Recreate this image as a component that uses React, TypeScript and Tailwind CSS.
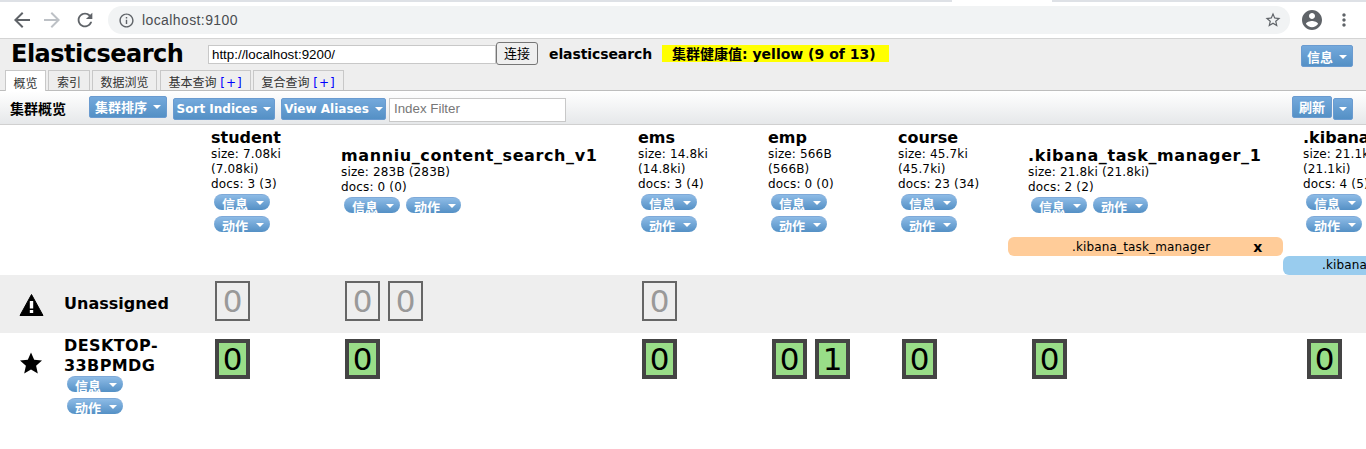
import React from "react";

const sans = "font-['DejaVu_Sans','Noto_Sans_CJK_SC',sans-serif]";

function Icon({ d, className = "", fill = "#5f6368" }: { d: string; className?: string; fill?: string }) {
  return (
    <svg viewBox="0 0 24 24" className={className} fill={fill}>
      <path d={d} />
    </svg>
  );
}

function Caret() {
  return <span className="ml-[6px] inline-block w-0 h-0 border-x-[4px] border-x-transparent border-t-[4px] border-t-white" />;
}

function Btn({ label, className = "" }: { label: string; className?: string }) {
  return (
    <div className={`flex items-center justify-center shrink-0 h-[22px] whitespace-nowrap rounded-[2px] border border-[#6a9bd0] bg-gradient-to-b from-[#74a9dc] to-[#5490c5] text-white font-bold leading-none ${className}`}>
      <span>{label}</span>
      <Caret />
    </div>
  );
}

function Pill({ label, narrow = false }: { label: string; narrow?: boolean }) {
  return (
    <div className={`${narrow ? "w-[55px]" : "w-[56px]"} h-[16px] overflow-hidden rounded-[8px] border-t border-[#7ea9d8] bg-gradient-to-b from-[#8dbbe6] to-[#5490c5] text-white font-bold text-[13px] leading-[20px] flex pl-[8px] shrink-0`}>
      <span>{label}</span>
      <span className="ml-[8px] mt-[6px] w-0 h-0 border-x-[4px] border-x-transparent border-t-[4px] border-t-white" />
    </div>
  );
}

function IndexHead({ name, lines, row = false, wide = false }: { name: string; lines: string[]; row?: boolean; wide?: boolean }) {
  return (
    <div className="pl-[20px] self-center mb-[2px]">
      <div className={`text-[16px] font-bold leading-[18px] whitespace-nowrap ${wide ? "tracking-[0.6px]" : ""}`}>{name}</div>
      {lines.map((l) => (
        <div key={l} className="text-[12px] leading-[15px] whitespace-nowrap tracking-[0.15px]">
          {l}
        </div>
      ))}
      <div className={row ? "flex gap-[6px] mt-[2px] ml-[3px]" : "flex flex-col gap-[6px] mt-[2px] ml-[3px]"}>
        <Pill label="信息" />
        <Pill label="动作" narrow={row} />
      </div>
    </div>
  );
}

function Shard({ n, primary }: { n: string; primary?: boolean }) {
  return primary ? (
    <div className="w-[35px] h-[40px] shrink-0 border-[4px] border-[#444444] bg-[#99dd88] flex items-center justify-center text-[31px] text-black leading-none font-normal">
      {n}
    </div>
  ) : (
    <div className="w-[35px] h-[40px] shrink-0 border-[2px] border-[#666666] flex items-center justify-center text-[31px] text-[#999999] leading-none font-normal">
      {n}
    </div>
  );
}

function Shards({ items, primary }: { items: string[]; primary?: boolean }) {
  return (
    <div className="pl-[24px] flex gap-[8px] items-start pt-[6px]">
      {items.map((n, i) => (
        <Shard key={i} n={n} primary={primary} />
      ))}
    </div>
  );
}

const cols = "grid grid-cols-[191px_130px_297px_130px_130px_130px_275px_130px]";

export default function App() {
  return (
    <div className={`w-[1366px] h-[449px] overflow-hidden bg-white text-black ${sans}`}>
      {/* browser chrome */}
      <div className="flex h-[2px] bg-[#dee1e6]">
        <div className="ml-[952px] w-[100px] bg-white" />
      </div>
      <div className="h-[36px] bg-white flex items-center">
        <Icon className="ml-[10px] w-[24px] h-[24px]" d="M20 11H7.83l5.59-5.59L12 4l-8 8 8 8 1.41-1.41L7.83 13H20v-2z" />
        <Icon className="ml-[6px] w-[24px] h-[24px] scale-x-[-1]" fill="#bdc1c6" d="M20 11H7.83l5.59-5.59L12 4l-8 8 8 8 1.41-1.41L7.83 13H20v-2z" />
        <Icon className="ml-[10px] w-[22px] h-[22px]" d="M17.65 6.35C16.2 4.9 14.21 4 12 4c-4.42 0-7.99 3.58-7.99 8s3.57 8 7.99 8c3.73 0 6.84-2.55 7.73-6h-2.08c-.82 2.33-3.04 4-5.65 4-3.31 0-6-2.69-6-6s2.69-6 6-6c1.66 0 3.14.69 4.22 1.78L13 11h7V4l-2.35 2.35z" />
        <div className="ml-[12px] w-[1182px] h-[28px] rounded-[14px] bg-[#f1f3f4] flex items-center pl-[10px] pr-[8px]">
          <Icon className="w-[17px] h-[17px]" d="M11 7h2v2h-2zm0 4h2v6h-2zm1-9C6.48 2 2 6.48 2 12s4.48 10 10 10 10-4.48 10-10S17.52 2 12 2zm0 18c-4.41 0-8-3.59-8-8s3.59-8 8-8 8 3.59 8 8-3.59 8-8 8z" />
          <span className="ml-[7px] text-[14px] text-[#4a4d51] font-['Liberation_Sans',sans-serif] tracking-[0.4px]">localhost:9100</span>
          <Icon className="ml-auto w-[18px] h-[18px]" d="M22 9.24l-7.19-.62L12 2 9.19 8.63 2 9.24l5.46 4.73L5.82 21 12 17.27 18.18 21l-1.63-7.03L22 9.24zM12 15.4l-3.76 2.27 1-4.28-3.32-2.88 4.38-.38L12 6.1l1.71 4.04 4.38.38-3.32 2.88 1 4.28L12 15.4z" />
        </div>
        <Icon className="ml-[10px] w-[24px] h-[24px]" d="M12 2C6.48 2 2 6.48 2 12s4.48 10 10 10 10-4.48 10-10S17.52 2 12 2zm0 3c1.66 0 3 1.34 3 3s-1.34 3-3 3-3-1.34-3-3 1.34-3 3-3zm0 14.2c-2.5 0-4.71-1.28-6-3.22.03-1.99 4-3.08 6-3.08 1.99 0 5.97 1.09 6 3.08-1.29 1.94-3.5 3.22-6 3.22z" />
        <Icon className="ml-[10px] w-[20px] h-[20px]" d="M12 8c1.1 0 2-.9 2-2s-.9-2-2-2-2 .9-2 2 .9 2 2 2zm0 2c-1.1 0-2 .9-2 2s.9 2 2 2 2-.9 2-2-.9-2-2-2zm0 6c-1.1 0-2 .9-2 2s.9 2 2 2 2-.9 2-2-.9-2-2-2z" />
      </div>

      {/* app header */}
      <div className="h-[53px] bg-[#eeeeee] border-t border-[#d4d4d4] border-b border-b-[#bdbdbd] flex flex-col">
        <div className="h-[31px] flex items-start">
          <div className="ml-[11px] w-[197px] text-[24px] font-bold leading-[31px] whitespace-nowrap tracking-[-0.5px]">Elasticsearch</div>
          <div className="mt-[6px] w-[288px] h-[19px] bg-white border border-[#c8c8c8] pl-[3px] text-[13.33px] leading-[17px] font-['Liberation_Sans',sans-serif]">http://localhost:9200/</div>
          <div className="mt-[3px] w-[42px] h-[23px] rounded-[3px] border border-[#767676] bg-[#efefef] text-[13px] leading-[21px] text-center">连接</div>
          <div className="ml-[11px] mt-[6px] w-[113px] text-[14px] font-bold leading-[19px] tracking-[-0.1px]">elasticsearch</div>
          <div className="mt-[6px] w-[227px] h-[17px] bg-[#ffff00] pl-[10px] text-[14px] font-bold leading-[18px] whitespace-nowrap">集群健康值: yellow (9 of 13)</div>
          <Btn label="信息" className="ml-auto mr-[13px] mt-[6px] w-[52px] pt-[2px] text-[13px]" />
        </div>
        <div className="flex items-end pl-[5px] h-[21px] text-[12px] text-[#333333]">
          <div className="w-[41px] h-[21px] mb-[-1px] bg-white border border-[#c8c8c8] border-b-0 text-center leading-[26px] overflow-hidden">概览</div>
          <div className="ml-[2px] w-[42px] h-[20px] border border-[#c8c8c8] border-b-0 text-center leading-[25px] overflow-hidden">索引</div>
          <div className="ml-[2px] w-[65px] h-[20px] border border-[#c8c8c8] border-b-0 text-center leading-[25px] overflow-hidden">数据浏览</div>
          <div className="ml-[3px] w-[91px] h-[20px] border border-[#c8c8c8] border-b-0 text-center leading-[25px] overflow-hidden whitespace-nowrap">
            基本查询 <span className="text-[#0000ff] tracking-[1px]">[+]</span>
          </div>
          <div className="ml-[2px] w-[91px] h-[20px] border border-[#c8c8c8] border-b-0 text-center leading-[25px] overflow-hidden whitespace-nowrap">
            复合查询 <span className="text-[#0000ff] tracking-[1px]">[+]</span>
          </div>
        </div>
      </div>

      {/* toolbar */}
      <div className="h-[34px] bg-gradient-to-b from-[#ffffff] to-[#e6e8ea] border-b border-[#d0d0d0] flex items-start pl-[10px] pr-[13px]">
        <div className="w-[79px] mt-[8px] text-[14px] font-bold leading-[20px]">集群概览</div>
        <Btn label="集群排序" className="w-[78px] mt-[5px] text-[13px]" />
        <Btn label="Sort Indices" className="w-[102px] mt-[7px] ml-[6px] text-[12px]" />
        <Btn label="View Aliases" className="w-[105px] mt-[7px] ml-[6px] text-[12px]" />
        <div className="ml-[3px] mt-[7px] w-[177px] h-[24px] bg-white border border-[#c8c8c8] pl-[4px] text-[13.33px] leading-[20px] text-[#777777] font-['Liberation_Sans',sans-serif]">Index Filter</div>
        <div className="ml-auto mt-[5px] w-[40px] h-[22px] rounded-[2px] border border-[#6a9bd0] bg-gradient-to-b from-[#74a9dc] to-[#5490c5] text-white font-bold text-[13px] leading-[21px] text-center">刷新</div>
        <div className="ml-[1px] mt-[7px] w-[20px] h-[22px] rounded-[2px] border border-[#6a9bd0] bg-gradient-to-b from-[#74a9dc] to-[#5490c5] flex items-center justify-center">
          <span className="w-0 h-0 border-x-[4px] border-x-transparent border-t-[4px] border-t-white" />
        </div>
      </div>

      {/* cluster table */}
      <div className="overflow-hidden">
        <div className={`${cols} grid-rows-[112px_19px_19px] w-[1413px]`}>
          <div />
          <IndexHead name="student" lines={["size: 7.08ki", "(7.08ki)", "docs: 3 (3)"]} />
          <IndexHead name="manniu_content_search_v1" lines={["size: 283B (283B)", "docs: 0 (0)"]} row wide />
          <IndexHead name="ems" lines={["size: 14.8ki", "(14.8ki)", "docs: 3 (4)"]} />
          <IndexHead name="emp" lines={["size: 566B", "(566B)", "docs: 0 (0)"]} />
          <IndexHead name="course" lines={["size: 45.7ki", "(45.7ki)", "docs: 23 (34)"]} />
          <IndexHead name=".kibana_task_manager_1" lines={["size: 21.8ki (21.8ki)", "docs: 2 (2)"]} row wide />
          <IndexHead name=".kibana_1" lines={["size: 21.1ki", "(21.1ki)", "docs: 4 (5)"]} />
          <div className="col-start-7 row-start-2 rounded-[6px] bg-[#ffcc99] text-[12px] leading-[20px] flex items-start pl-[64px] tracking-[0.15px]">
            <span>.kibana_task_manager</span>
            <span className="ml-[43px] font-bold text-[14px]">x</span>
          </div>
          <div className="col-start-8 row-start-3 rounded-l-[6px] bg-[#99ccee] text-[12px] leading-[19px] pl-[39px] whitespace-nowrap tracking-[0.15px]">.kibana</div>
        </div>

        <div className={`${cols} w-[1413px] h-[58px] bg-[#eeeeee]`}>
          <div className="flex items-start">
            <svg viewBox="0 0 24 24" className="ml-[19px] mt-[18px] w-[25px] h-[24px]">
              <path d="M12 1.5 23.5 22.5H.5z" fill="#000" stroke="#000" strokeWidth="1" strokeLinejoin="round" />
              <rect x="10.3" y="8" width="3.4" height="7.5" fill="#fff" />
              <rect x="10.3" y="17" width="3.4" height="3" fill="#fff" />
            </svg>
            <div className="ml-[20px] mt-[19px] text-[16px] font-bold leading-[20px] whitespace-nowrap">Unassigned</div>
          </div>
          <Shards items={["0"]} />
          <Shards items={["0", "0"]} />
          <Shards items={["0"]} />
        </div>

        <div className={`${cols} w-[1413px]`}>
          <div className="flex items-start">
            <svg viewBox="0 0 24 24" className="ml-[19px] mt-[18px] w-[24px] h-[24px] shrink-0">
              <path d="M12 1.5l3.2 7.2 7.8.8-5.9 5.2 1.7 7.7L12 18.4l-6.8 4 1.7-7.7L1 9.5l7.8-.8z" fill="#000" />
            </svg>
            <div className="ml-[21px] mt-[3px] text-[16px] font-bold leading-[20px] tracking-[0.4px]">
              <div>DESKTOP-</div>
              <div>33BPMDG</div>
              <div className="flex flex-col gap-[6px] mt-[0px] ml-[3px] tracking-normal">
                <Pill label="信息" />
                <Pill label="动作" />
              </div>
            </div>
          </div>
          <Shards items={["0"]} primary />
          <Shards items={["0"]} primary />
          <Shards items={["0"]} primary />
          <div className="pl-[24px] pt-[6px] flex gap-[8px] items-start">
            <Shard n="0" primary />
            <Shard n="1" primary />
          </div>
          <Shards items={["0"]} primary />
          <Shards items={["0"]} primary />
          <Shards items={["0"]} primary />
        </div>
      </div>
    </div>
  );
}
